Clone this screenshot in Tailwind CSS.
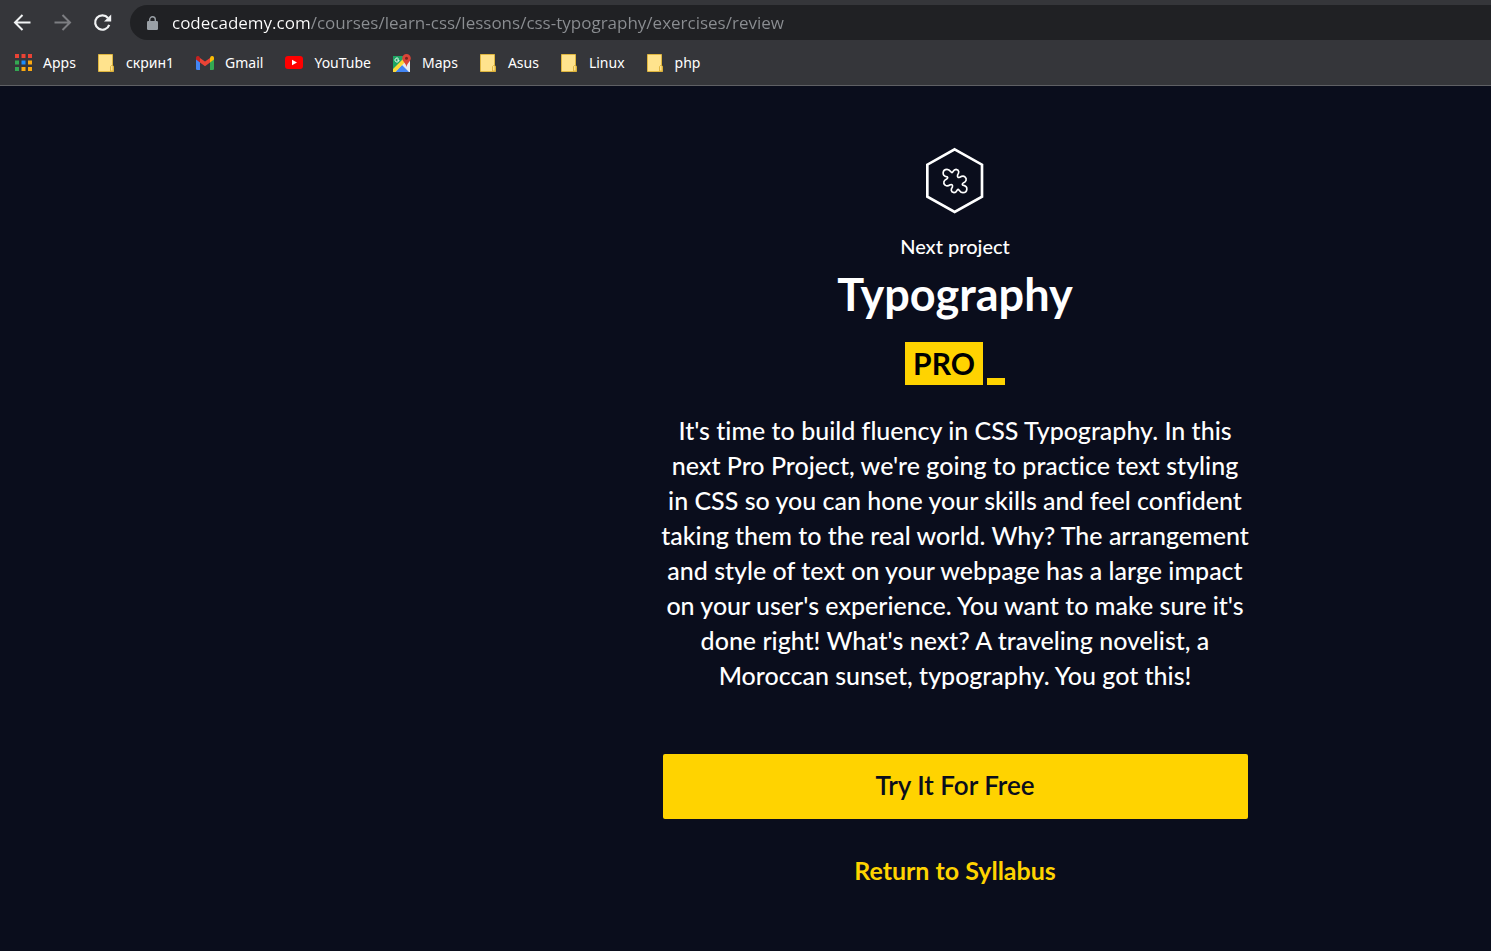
<!DOCTYPE html>
<html lang="en">
<head>
<meta charset="utf-8">
<meta name="viewport" content="width=device-width, initial-scale=1">
<title>Next project: Typography</title>
<script src="https://cdn.jsdelivr.net/npm/@tailwindcss/browser@4"></script>
</head>
<body class="flex min-h-screen flex-col bg-[#0a0d1c] font-['Lato',sans-serif] text-white">
<svg class="hidden" aria-hidden="true">
  <symbol id="folder" viewBox="0 0 16 18">
    <path d="M.5.5h14v11l1 1v5H.5z" fill="#ffe38d" stroke="#dfb63f"/>
    <path d="M12.5 17v-4.500l1-1h1.500v5.500z" fill="#ffe38d" stroke="#d9ab2f" stroke-width=".8"/>
  </symbol>
</svg>

<header class="border-b border-[#5f6064] bg-[#35363a] pt-[5px] font-['Noto_Sans','Open_Sans',sans-serif]">
  <div class="flex h-[35px] items-center pl-3">
    <nav class="flex items-center gap-5" aria-label="History">
      <button type="button" aria-label="Back" class="size-5"><svg class="size-5" viewBox="0 0 20 20" fill="none" stroke="#f1f3f4" stroke-width="2"><path d="M18.500 9.500H3.500M10.500 2 3 9.500 10.500 17"/></svg></button>
      <button type="button" aria-label="Forward" class="size-5"><svg class="size-5" viewBox="0 0 20 20" fill="none" stroke="#7d7e82" stroke-width="2"><path d="M2.500 9.500h15M10.500 2 18 9.500 10.500 17"/></svg></button>
      <button type="button" aria-label="Reload" class="size-5"><svg class="size-5" viewBox="0 0 20 20"><path d="M16 5A7.200 7.200 0 1 0 17.200 11.800" fill="none" stroke="#f1f3f4" stroke-width="2.200"/><path d="M19.200 1.500V8.600H12z" fill="#f1f3f4"/></svg></button>
    </nav>
    <form class="ml-[18px] flex h-full flex-1 items-center gap-[14px] rounded-l-full bg-[#202124] pl-[17px]">
      <svg class="h-[14px] w-[11px] shrink-0" viewBox="0 0 11 14" aria-hidden="true"><path d="M2.700 6V3.600a2.800 2.800 0 0 1 5.600 0V6" fill="none" stroke="#9aa0a6" stroke-width="1.400"/><rect y="5" width="11" height="9" rx="1.200" fill="#9aa0a6"/></svg>
      <input type="text" aria-label="Address" value="codecademy.com/courses/learn-css/lessons/css-typography/exercises/review" class="h-full min-w-0 flex-1 bg-[linear-gradient(90deg,#fff_138px,#8b8e92_138px)] bg-clip-text font-['Open_Sans',sans-serif] text-[17px] text-transparent caret-white outline-none">
    </form>
  </div>
  <nav class="flex h-[45px] items-center gap-[22px] pl-[15px] text-sm" aria-label="Bookmarks">
    <a href="#" class="flex items-center gap-[11px]"><svg class="size-[17px]" viewBox="0 0 17 17"><path d="M0 0h4v4H0zM6.500 0h4v4h-4zM13 0h4v4h-4z" fill="#ea4335"/><path d="M0 6.500h4v4H0zM0 13h4v4H0z" fill="#34a853"/><path d="M6.500 6.500h4v4h-4z" fill="#1a8cff"/><path d="M13 6.500h4v4h-4zM6.500 13h4v4h-4zM13 13h4v4h-4z" fill="#fba911"/></svg>Apps</a>
    <a href="#" class="flex items-center gap-3"><svg class="h-[18px] w-4"><use href="#folder"/></svg>скрин1</a>
    <a href="#" class="flex items-center gap-[11px]"><svg class="h-[14px] w-[18px]" viewBox="0 0 18 14"><path d="M0 2v10.700Q0 14 1.300 14H4V6z" fill="#4285f4"/><path d="M18 2v10.700Q18 14 16.700 14H14V6z" fill="#34a853"/><path d="M14 2v4.500L18 3.500V2c0-1.900-2-2.600-3.300-1.500z" fill="#fbbc04"/><path d="M4 2v4.500l5 3.800 5-3.800V2L9 5.600z" fill="#ea4335"/><path d="M0 2v1.500l4 3V2L3.300.5C2-.6 0 .1 0 2z" fill="#c5221f"/></svg>Gmail</a>
    <a href="#" class="flex items-center gap-[11px]"><svg class="h-[13px] w-[18px]" viewBox="0 0 18 13"><rect width="18" height="13" rx="3" fill="#f00"/><path d="M7 3.700v5.600l5-2.800z" fill="#fff"/></svg>YouTube</a>
    <a href="#" class="flex items-center gap-[11px]"><svg class="size-[18px]" viewBox="0 0 18 18"><path d="M0 2h13v16H0z" fill="#1ea362"/><path d="M0 18 15 3l2 2v13z" fill="#e8eaed"/><path d="m2 18 7-7 7 7z" fill="#4285f4"/><path d="M0 15 12 3l2 3L2.500 18H0z" fill="#fdd835"/><path d="M5.500 4.700A2 2 0 1 0 6 6H4.200" fill="none" stroke="#fff"/><path d="M13.500 0A4.300 4.300 0 0 0 9.200 4.300c0 3 3.600 4.500 4.300 8.700.7-4.200 4.300-5.700 4.300-8.700A4.300 4.300 0 0 0 13.500 0z" fill="#db4437"/><circle cx="13.500" cy="4.300" r="1.500" fill="#7b231c"/></svg>Maps</a>
    <a href="#" class="flex items-center gap-3"><svg class="h-[18px] w-4"><use href="#folder"/></svg>Asus</a>
    <a href="#" class="flex items-center gap-3"><svg class="h-[18px] w-4"><use href="#folder"/></svg>Linux</a>
    <a href="#" class="flex items-center gap-3"><svg class="h-[18px] w-4"><use href="#folder"/></svg>php</a>
  </nav>
</header>

<main class="flex flex-1 flex-col items-center pt-[54px] pl-[419px] text-center">
  <svg class="size-20" viewBox="0 0 240 240" fill="none" stroke="#fff" aria-hidden="true">
    <path d="M119 28 201 74v96l-82 46-82-46V74z" stroke-width="8"/>
    <path d="M94 110C80 107 82 88 96 88C106 88 107 98 111 98C115 98 114 88 123 88C134 90 132 99 128 104C126 110 129 114 134 112C139 109 145 106 150 111C157 117 153 125 146 128C140 132 141 136 146 136C160 139 158 158 144 158C134 158 133 148 129 148C125 148 126 158 117 158C106 156 108 147 112 142C114 136 111 132 106 134C101 137 95 140 90 135C83 129 87 121 94 118C100 114 99 110 94 110Z" stroke-width="5"/>
  </svg>
  <p class="mt-[11px] text-[20px] leading-[30px] font-medium">Next project</p>
  <h1 class="mt-[3px] text-[45px] leading-[60px] font-bold">Typography</h1>
  <div class="mt-[18px] flex items-end gap-1">
    <span class="flex h-[43px] w-[78px] items-center justify-center bg-[#ffd300] text-[30px] font-bold text-black">PRO</span>
    <span class="h-[7px] w-[18px] bg-[#ffd300]"></span>
  </div>
  <p class="mt-7 text-[25px] leading-[35px] font-medium whitespace-nowrap [font-variant-ligatures:no-common-ligatures]">It's time to build fluency in CSS Typography. In this<br>next Pro Project, we're going to practice text styling<br>in CSS so you can hone your skills and feel confident<br>taking them to the real world. Why? The arrangement<br>and style of text on your webpage has a large impact<br>on your user's experience. You want to make sure it's<br>done right! What's next? A traveling novelist, a<br>Moroccan sunset, typography. You got this!</p>
  <button type="button" class="mt-[61px] h-[65px] w-full max-w-[585px] rounded-[2px] bg-[#ffd300] pb-[2px] text-[26px] font-semibold text-[#0a0d1c]">Try It For Free</button>
  <a href="#" class="mt-[34px] text-[25px] leading-[35px] font-bold text-[#ffd300]">Return to Syllabus</a>
</main>
</body>
</html>
